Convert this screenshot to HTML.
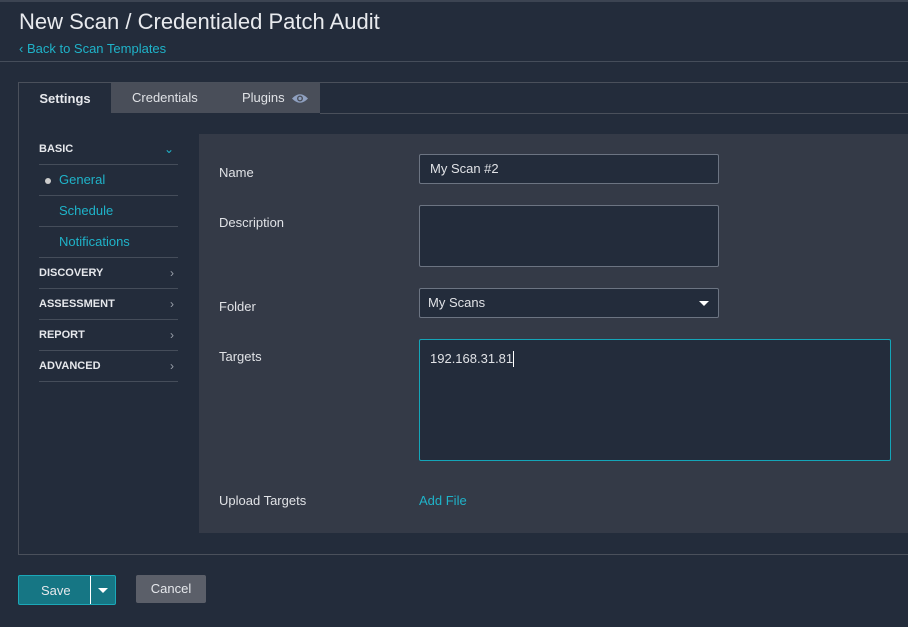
<!DOCTYPE html>
<html><head><style>
*{box-sizing:border-box;margin:0;padding:0}
body{width:908px;height:627px;background:#232c3b;font-family:"Liberation Sans",sans-serif;color:#e6e8ec;position:relative;overflow:hidden}
.a{position:absolute}
.top{left:0;top:0;width:908px;height:2px;background:#3c4452}
.title{left:19px;top:9px;font-size:22px;color:#e8eaee;letter-spacing:0}
.back{left:19px;top:41px;font-size:13px;color:#1fb3c9}
.hr{left:0;top:61px;width:908px;height:1px;background:#454d5a}
.box{left:18px;top:82px;width:900px;height:473px;border:1px solid #4a505b;border-right:none}
.tabline{left:320px;top:113px;width:588px;height:1px;background:#4a505b}
.t1{left:19px;top:83px;width:92px;height:31px;background:#232c3b;font-size:13px;font-weight:bold;text-align:center;line-height:31px}
.t2{left:111px;top:83px;width:209px;height:30px;background:#494e59;font-size:13px;line-height:30px;color:#e0e2e6}
.panel{left:199px;top:134px;width:709px;height:399px;background:#343a47}
.nav{left:39px;width:139px;border-bottom:1px solid #454d5a;height:31px;font-size:11px;font-weight:bold;line-height:30px}
.sub{font-weight:normal;font-size:13px;color:#1fb3c9;padding-left:20px}
.chev{position:absolute;right:4px;top:0;color:#9aa0aa;font-weight:normal;font-size:12px}
.lbl{left:219px;font-size:13px;color:#e0e2e6}
.in{left:419px;background:#232c3b;border:1px solid #6c7482;border-radius:2px;font-size:13px;color:#e0e2e6;padding-left:10px}
</style></head><body>
<div class="a top"></div>
<div class="a title">New Scan / Credentialed Patch Audit</div>
<div class="a back">‹ Back to Scan Templates</div>
<div class="a hr"></div>
<div class="a box"></div>
<div class="a tabline"></div>
<div class="a t1">Settings</div>
<div class="a t2"><span style="position:absolute;left:21px">Credentials</span><span style="position:absolute;left:131px">Plugins</span>
<svg style="position:absolute;left:180px;top:10px" width="18" height="11" viewBox="0 0 18 11"><path d="M1 5.5Q9 -3 17 5.5Q9 14 1 5.5Z" fill="#8fa0c0"/><circle cx="9" cy="5.5" r="3" fill="#494e59"/><circle cx="9" cy="5.5" r="1.6" fill="#8fa0c0"/></svg></div>
<div class="a panel"></div>
<div class="a nav" style="top:134px">BASIC<span class="chev" style="color:#1fb3c9">⌄</span></div>
<div class="a nav sub" style="top:165px"><span style="position:absolute;left:6px;top:13px;width:6px;height:6px;border-radius:3px;background:#ccc"></span>General</div>
<div class="a nav sub" style="top:196px">Schedule</div>
<div class="a nav sub" style="top:227px">Notifications</div>
<div class="a nav" style="top:258px">DISCOVERY<span class="chev">›</span></div>
<div class="a nav" style="top:289px">ASSESSMENT<span class="chev">›</span></div>
<div class="a nav" style="top:320px">REPORT<span class="chev">›</span></div>
<div class="a nav" style="top:351px">ADVANCED<span class="chev">›</span></div>
<div class="a lbl" style="top:165px">Name</div>
<div class="a lbl" style="top:215px">Description</div>
<div class="a lbl" style="top:299px">Folder</div>
<div class="a lbl" style="top:349px">Targets</div>
<div class="a lbl" style="top:493px">Upload Targets</div>
<div class="a in" style="top:154px;width:300px;height:30px;line-height:28px">My Scan #2</div>
<div class="a in" style="top:205px;width:300px;height:62px"></div>
<div class="a in" style="top:288px;width:300px;height:30px;line-height:28px;padding-left:8px">My Scans<span style="position:absolute;right:9px;top:12px;border-left:5px solid transparent;border-right:5px solid transparent;border-top:5px solid #fff"></span></div>
<div class="a in" style="top:339px;width:472px;height:122px;border-color:#14a5b8;padding-top:11px;line-height:16px">192.168.31.81<span style="display:inline-block;width:1px;height:16px;background:#fff;vertical-align:top"></span></div>
<div class="a" style="left:419px;top:493px;font-size:13px;color:#1fb3c9">Add File</div>
<div class="a" style="left:18px;top:575px;width:98px;height:30px;background:#167684;border:1px solid #1ba8b8;border-radius:2px;font-size:13px"><span style="position:absolute;left:22px;top:7px">Save</span><span style="position:absolute;left:71px;top:0;width:1px;height:28px;background:#fff"></span><span style="position:absolute;left:79px;top:12px;border-left:5px solid transparent;border-right:5px solid transparent;border-top:5px solid #fff"></span></div>
<div class="a" style="left:136px;top:575px;width:70px;height:28px;background:#5b5f69;border-radius:2px;font-size:13px;text-align:center;line-height:28px;color:#e6e8ec">Cancel</div>
</body></html>
